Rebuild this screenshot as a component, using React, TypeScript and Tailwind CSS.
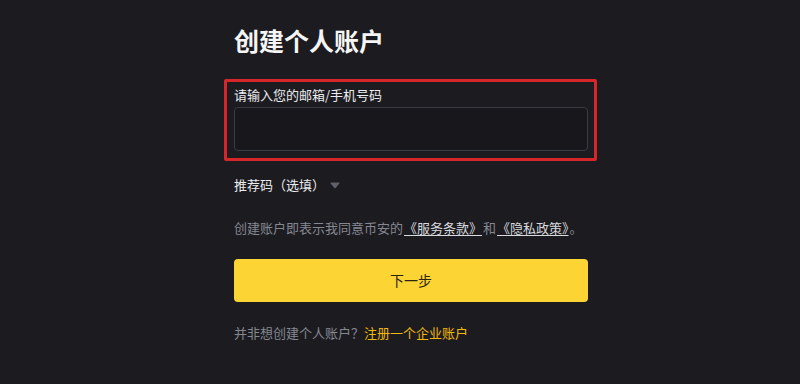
import React from 'react';

const font = { fontFamily: '"Noto Sans CJK SC", "Noto Sans", sans-serif' };

export default function App() {
  return (
    <div className="w-[800px] h-[384px] bg-[#1c1b20] overflow-hidden" style={font}>
      <div className="ml-[234px] w-[354px] pt-[24px] flex flex-col">
        <h1 className="text-[25px] leading-[32px] font-bold text-[#f5f5f5]">创建个人账户</h1>

        {/* highlighted field */}
        <div className="mt-[23px] -ml-[10px] w-[373px] h-[82px] border-[3px] border-[#d6262b] rounded-[2px] pl-[7px] pt-[4px]">
          <label className="block text-[13px] leading-[18px] text-[#eaecef]">请输入您的邮箱/手机号码</label>
          <input
            className="mt-[3px] block w-[354px] h-[44px] rounded-[4px] border border-[#3a3c44] bg-[#17171c] outline-none px-3 text-[14px] text-[#eaecef]"
            type="text"
          />
        </div>

        <div className="mt-[15px] flex items-center h-[18px] text-[13px] text-[#eaecef]">
          <span>推荐码（选填）</span>
          <svg className="ml-[5px] mt-[1px]" width="10" height="7" viewBox="0 0 10 7">
            <path d="M1 0.5 L9 0.5 Q10 0.5 9.3 1.5 L5.6 6 Q5 6.7 4.4 6 L0.7 1.5 Q0 0.5 1 0.5 Z" fill="#5e6169" />
          </svg>
        </div>

        <p className="mt-[25px] text-[13px] leading-[18px] text-[#848891] whitespace-nowrap">
          创建账户即表示我同意币安的
          <a className="mx-[1px] text-[#d8dade] underline underline-offset-2">《服务条款》</a>
          和
          <a className="mx-[1px] text-[#d8dade] underline underline-offset-2">《隐私政策》</a>
          。
        </p>

        <button className="mt-[22px] h-[43px] w-[354px] rounded-[4px] bg-[#fcd535] text-[14px] text-[#2b2410]">
          下一步
        </button>

        <p className="mt-[22px] text-[13px] leading-[18px] text-[#848891]">
          并非想创建个人账户？<a className="text-[#f0b90b]">注册一个企业账户</a>
        </p>
      </div>
    </div>
  );
}
